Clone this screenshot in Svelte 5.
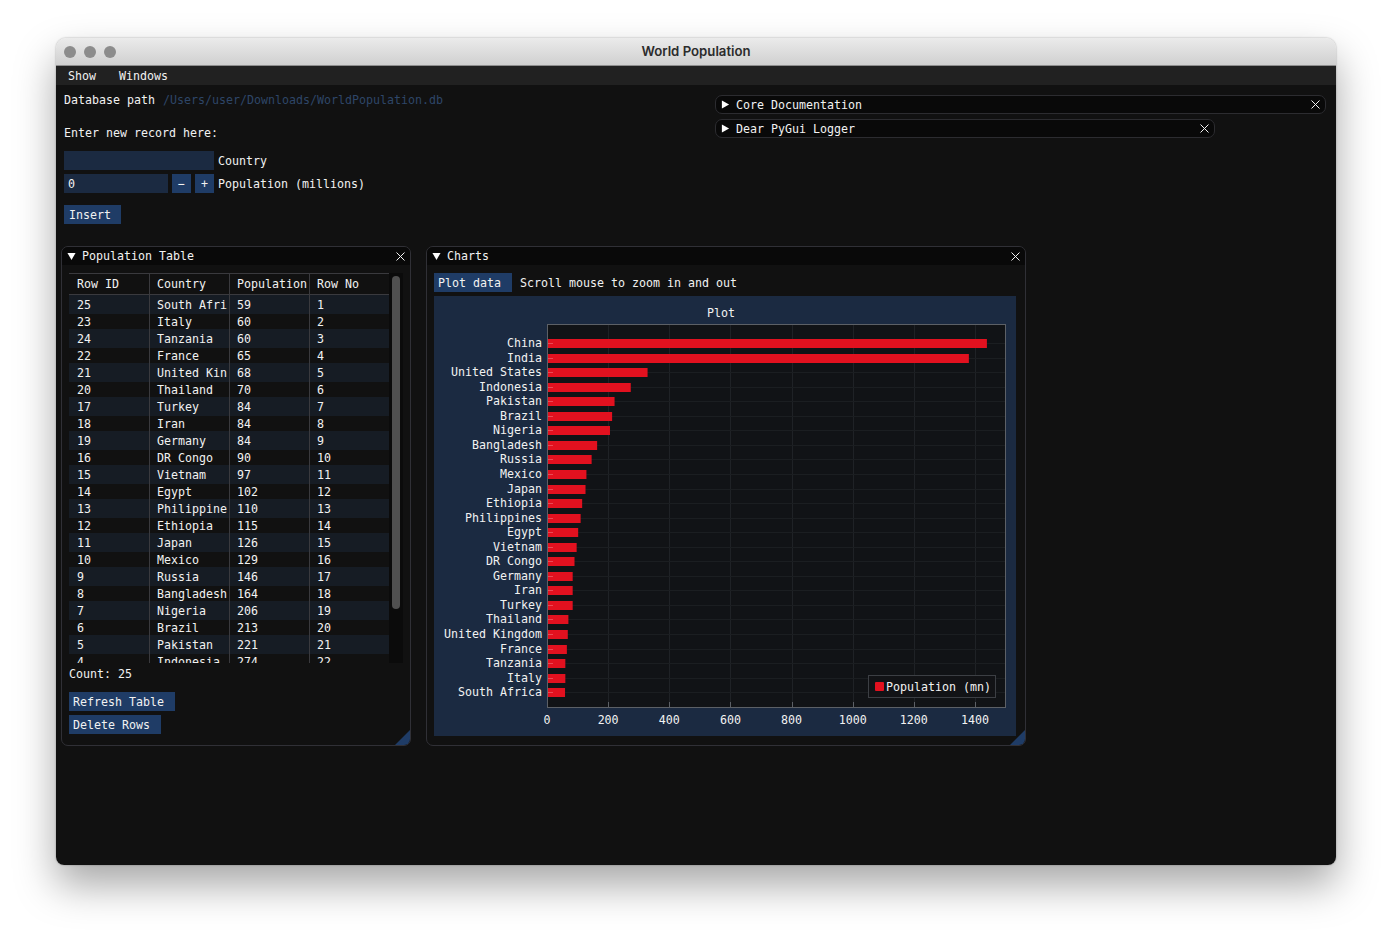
<script>
  const rows = [
    [25,'South Africa',59,1],[23,'Italy',60,2],[24,'Tanzania',60,3],[22,'France',65,4],[21,'United Kingdom',68,5],
    [20,'Thailand',70,6],[17,'Turkey',84,7],[18,'Iran',84,8],[19,'Germany',84,9],[16,'DR Congo',90,10],
    [15,'Vietnam',97,11],[14,'Egypt',102,12],[13,'Philippines',110,13],[12,'Ethiopia',115,14],[11,'Japan',126,15],
    [10,'Mexico',129,16],[9,'Russia',146,17],[8,'Bangladesh',164,18],[7,'Nigeria',206,19],[6,'Brazil',213,20],
    [5,'Pakistan',221,21],[4,'Indonesia',274,22]
  ];
  const bars = [
    ['China',1439],['India',1380],['United States',329],['Indonesia',274],['Pakistan',221],['Brazil',213],['Nigeria',206],
    ['Bangladesh',164],['Russia',146],['Mexico',129],['Japan',126],['Ethiopia',115],['Philippines',110],['Egypt',102],
    ['Vietnam',97],['DR Congo',90],['Germany',84],['Iran',84],['Turkey',84],['Thailand',70],['United Kingdom',68],
    ['France',65],['Tanzania',60],['Italy',60],['South Africa',59]
  ];
  const ticks = [0,200,400,600,800,1000,1200,1400];
  const px = (v) => 113 + v * 0.3057;
  const py = (i) => 47 + i * 14.55;
</script>

<div class="page">
<div class="win">
  <header class="titlebar">
    <div class="lights"><i></i><i></i><i></i></div>
    <div class="wtitle">World Population</div>
  </header>
  <nav class="menu"><span>Show</span><span>Windows</span></nav>
  <main class="body">
    <section class="top">
      <div class="form">
        <div class="path"><span>Database path</span><span class="dim">/Users/user/Downloads/WorldPopulation.db</span></div>
        <div class="enter">Enter new record here:</div>
        <div class="line country"><div class="input wide"></div><span>Country</span></div>
        <div class="line"><div class="input num">0</div><div class="btn sq">−</div><div class="btn sq">+</div><span>Population (millions)</span></div>
        <div class="btn insert">Insert</div>
      </div>
      <div class="collapsed">
        <div class="pill long"><svg class="arrow" viewBox="0 0 10 10"><path d="M1 0.5L9 5L1 9.5Z"/></svg><span>Core Documentation</span><svg class="x" viewBox="0 0 9 9"><path d="M0.5 0.5L8.5 8.5M8.5 0.5L0.5 8.5"/></svg></div>
        <div class="pill short"><svg class="arrow" viewBox="0 0 10 10"><path d="M1 0.5L9 5L1 9.5Z"/></svg><span>Dear PyGui Logger</span><svg class="x" viewBox="0 0 9 9"><path d="M0.5 0.5L8.5 8.5M8.5 0.5L0.5 8.5"/></svg></div>
      </div>
    </section>

    <section class="panels">
      <article class="panel tablepanel">
        <div class="ptitle"><svg class="arrow down" viewBox="0 0 10 10"><path d="M0.5 1H9.5L5 9Z"/></svg><span>Population Table</span><svg class="x" viewBox="0 0 9 9"><path d="M0.5 0.5L8.5 8.5M8.5 0.5L0.5 8.5"/></svg></div>
        <div class="pbody">
          <div class="tablewrap">
            <div class="table">
              <div class="thead">
                <div class="cell">Row ID</div><div class="cell">Country</div><div class="cell">Population</div><div class="cell">Row No</div>
              </div>
              {#each rows as r, i}
                <div class="tr" class:odd={i % 2 === 0}>
                  {#each r as c}<div class="cell">{c}</div>{/each}
                </div>
              {/each}
            </div>
            <div class="scroll"><div class="thumb"></div></div>
          </div>
          <div class="count">Count: 25</div>
          <div class="btn refresh">Refresh Table</div>
          <div class="btn delete">Delete Rows</div>
        </div>
        <div class="grip"></div>
      </article>

      <article class="panel chartpanel">
        <div class="ptitle"><svg class="arrow down" viewBox="0 0 10 10"><path d="M0.5 1H9.5L5 9Z"/></svg><span>Charts</span><svg class="x" viewBox="0 0 9 9"><path d="M0.5 0.5L8.5 8.5M8.5 0.5L0.5 8.5"/></svg></div>
        <div class="pbody">
          <div class="chartbar"><div class="btn plotbtn">Plot data</div><span>Scroll mouse to zoom in and out</span></div>
          <div class="plot">
            <svg width="582" height="440" viewBox="0 0 582 440">
              <rect x="0" y="0" width="582" height="440" fill="#1b2a41"/>
              <text class="t" x="287" y="21" text-anchor="middle">Plot</text>
              <rect x="113.5" y="28.5" width="458" height="383" fill="#111316"/>
              {#each ticks as t}
                <line x1={Math.round(px(t)) + .5} x2={Math.round(px(t)) + .5} y1="29" y2="411" stroke="#1f2226"/>
                <line x1={Math.round(px(t)) + .5} x2={Math.round(px(t)) + .5} y1="406" y2="411" stroke="#5c6066"/>
                <text class="t" x={px(t)} y="428" text-anchor="middle">{t}</text>
              {/each}
              {#each bars as b, i}
                <line x1="114" x2="571" y1={Math.round(py(i)) + .5} y2={Math.round(py(i)) + .5} stroke="#1b1e21"/>
              {/each}
              {#each bars as b, i}
                <rect x="114" y={Math.round(py(i)) - 4} width={b[1] * 0.3057 - 1} height="9" fill="#e2111f"/>
                <line x1="114" x2="119" y1={Math.round(py(i)) + .5} y2={Math.round(py(i)) + .5} stroke="#ea4a55"/>
                <text class="t" x="108" y={Math.round(py(i)) + 4} text-anchor="end">{b[0]}</text>
              {/each}
              <rect x="113.5" y="28.5" width="458" height="383" fill="none" stroke="#5c6066"/>
            </svg>
            <div class="legend"><i></i><span>Population (mn)</span></div>
          </div>
        </div>
        <div class="grip"></div>
      </article>
    </section>
  </main>
</div>
</div>

<style>
  :global(body) { margin: 0; background: #fff; }
  .page { height: 940px; padding-top: 38px; box-sizing: border-box; overflow: hidden; }
  .win {
    margin: 0 56px;
    width: 1280px;
    height: 827px;
    display: flex;
    flex-direction: column;
    border-radius: 10px 10px 8px 8px;
    box-shadow: 0 20px 40px rgba(0,0,0,.35), 0 0 2px rgba(0,0,0,.35);
    font: 11.63px/13px "DejaVu Sans Mono", monospace;
    color: #f2f2f2;
  }
  .titlebar {
    height: 28px;
    flex: none;
    box-sizing: border-box;
    display: flex;
    align-items: center;
    position: relative;
    background: linear-gradient(#ebebeb, #d0d0d0);
    border-bottom: 1px solid #8e8e8e;
    border-radius: 10px 10px 0 0;
  }
  .lights { display: flex; gap: 8px; padding-left: 8px; }
  .lights i { width: 12px; height: 12px; border-radius: 50%; background: #8c8c8c; }
  .wtitle {
    position: absolute; inset: 0; text-align: center;
    font: 600 13.2px/26px "Inter", sans-serif; color: #2c2c2c;
  }
  .menu {
    height: 19px; flex: none; display: flex; gap: 23px; padding-left: 12px;
    background: #212121; line-height: 20px;
  }
  .body { flex: 1; background: #111111; min-height: 0; border-radius: 0 0 8px 8px; }
  .top { height: 161px; display: flex; }
  .form { width: 659px; box-sizing: border-box; padding: 9px 0 0 8px; }
  .path { display: flex; gap: 8px; }
  .dim { color: #2e4668; }
  .enter { margin-top: 20px; }
  .line { display: flex; gap: 4px; align-items: center; height: 19px; margin-top: 4px; }
  .line > span { padding-top: 2px; }
  .country { margin-top: 11px; }
  .input { background: #1b2a41; height: 19px; line-height: 21px; box-sizing: border-box; }
  .wide { width: 150px; }
  .num { width: 104px; padding-left: 4px; }
  .btn { background: #1f3c66; height: 19px; line-height: 21px; box-sizing: border-box; padding-left: 4px; }
  .sq { width: 19px; padding: 0; text-align: center; }
  .insert { width: 57px; margin-top: 12px; padding-left: 5px; }
  .collapsed { padding-top: 10px; display: flex; flex-direction: column; gap: 5px; }
  .pill {
    height: 19px; box-sizing: border-box; display: flex; align-items: center;
    background: #090909; border: 1px solid #2c2c30; border-radius: 7px; padding: 0 5px;
  }
  .pill span { padding-top: 2px; }
  .long { width: 611px; }
  .short { width: 500px; }
  .arrow { width: 9px; height: 9px; fill: #fff; flex: none; margin-right: 6px; }
  .x { width: 9px; height: 9px; margin-left: auto; flex: none; stroke: #f2f2f2; fill: none; stroke-width: 1; }
  .panels { display: flex; gap: 15px; padding-left: 5px; align-items: flex-start; }
  .panel {
    position: relative; box-sizing: border-box; height: 500px;
    border: 1px solid #303036; border-radius: 7px; overflow: hidden;
  }
  .tablepanel { width: 350px; }
  .chartpanel { width: 600px; }
  .ptitle {
    height: 18px; display: flex; align-items: center; background: #090909; padding: 0 5px;
  }
  .pbody { padding: 8px 7px 0; }
  .tablewrap { display: flex; height: 390px; overflow: hidden; }
  .table { width: 320px; overflow: hidden; flex: none; border-top: 1px solid #3a3a3e; box-sizing: border-box; }
  .thead { display: grid; grid-template-columns: repeat(4, 80px); height: 21px; line-height: 21px; border-bottom: 1px solid #3a3a3e; box-sizing: border-box; }
  .tr { display: grid; grid-template-columns: repeat(4, 80px); height: 17px; line-height: 19px; position: relative; margin-bottom: -1px; }
  .tr.odd { height: 19px; line-height: 20px; background: #161c24; }
  .cell {
    box-sizing: border-box; padding: 0 2px 0 7px; overflow: hidden; white-space: nowrap;
    border-left: 1px solid #3a3a3e;
    clip-path: inset(0 2px 0 0);
  }
  .cell:first-child { border-left: 0; padding-left: 8px; }
  .scroll { width: 14px; background: #0b0b0b; padding: 3px 3px 0; box-sizing: border-box; }
  .thumb { height: 333px; border-radius: 4px; background: #505050; }
  .count { margin-top: 5px; height: 13px; }
  .refresh { width: 106px; margin-top: 11px; }
  .delete { width: 92px; margin-top: 4px; }
  .chartbar { display: flex; align-items: center; gap: 8px; height: 19px; }
  .chartbar > span { padding-top: 2px; }
  .plotbtn { width: 78px; }
  .plot { margin-top: 4px; width: 582px; height: 440px; position: relative; }
  .plot svg { display: block; }
  .t { font: 11.63px "DejaVu Sans Mono", monospace; fill: #f2f2f2; }
  .legend {
    position: absolute; right: 20px; bottom: 38px; width: 128px; height: 23px;
    box-sizing: border-box; display: flex; align-items: center; gap: 2px; padding-left: 6px;
    background: #121316; border: 1px solid #3c3f44;
  }
  .legend span { padding-top: 2px; }
  .legend i { width: 9px; height: 9px; background: #e2111f; border-radius: 1px; }
  .grip {
    position: absolute; right: 0; bottom: 0; width: 0; height: 0;
    border-left: 15px solid transparent; border-bottom: 15px solid #1f3c66;
  }
</style>
